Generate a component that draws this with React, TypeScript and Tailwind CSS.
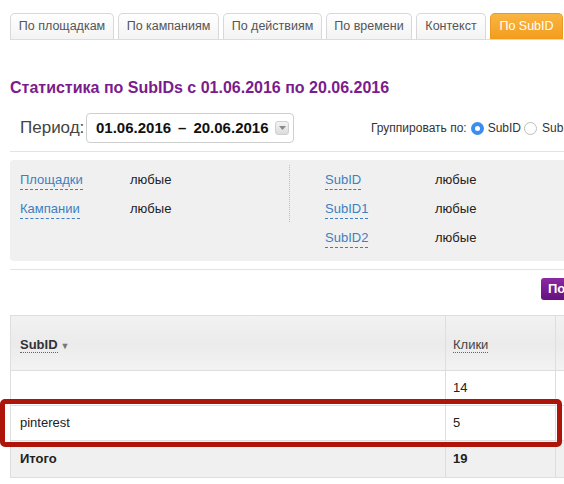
import React from "react";

const tabs = [
  { label: "По площадкам", w: "w-[104px]" },
  { label: "По кампаниям", w: "w-[101px]" },
  { label: "По действиям", w: "w-[99px]" },
  { label: "По времени", w: "w-[86px]" },
  { label: "Контекст", w: "w-[70px]" },
];

function FilterRow({ label, value }: { label: string; value: string }) {
  return (
    <div className="flex h-[20px] items-center">
      <div className="w-[110px]">
        <span className="pb-[2px] border-b border-dashed border-[#3d7fc0] text-[#3d7fc0]">{label}</span>
      </div>
      <span className="text-[#222]">{value}</span>
    </div>
  );
}

export default function App() {
  return (
    <div
      className="w-[564px] h-[484px] overflow-hidden bg-white relative"
      style={{ fontFamily: '"Liberation Sans", Arial, sans-serif' }}
    >
      <div className="w-[680px] pl-[10px]">
        {/* Tabs */}
        <div className="pt-[13px] flex gap-[4px] border-b border-[#dcdcdc]">
          {tabs.map((t) => (
            <div
              key={t.label}
              className={`${t.w} h-[26px] flex items-center justify-center rounded-t-[5px] border border-b-0 border-[#d8d8d8] bg-gradient-to-b from-white to-[#f3f3f3] text-[12.5px] text-[#555]`}
            >
              {t.label}
            </div>
          ))}
          <div className="w-[73px] h-[26px] flex items-center justify-center rounded-t-[5px] border border-b-0 border-[#e99a22] bg-gradient-to-b from-[#f9b540] to-[#f39c1b] text-[12.5px] text-white">
            По SubID
          </div>
        </div>

        {/* Title */}
        <h1 className="mt-[38px] text-[16px] leading-[20px] font-bold text-[#7a1c8c]">
          Статистика по SubIDs с 01.06.2016 по 20.06.2016
        </h1>

        {/* Period row */}
        <div className="mt-[15px] flex items-center h-[30px]">
          <span className="ml-[10px] w-[66px] text-[17px] text-[#444]">Период:</span>
          <div className="w-[208px] h-[30px] border border-[#cfcfcf] rounded-[4px] flex items-center pl-[9px] pr-[4px] bg-white">
            <span className="whitespace-nowrap text-[15px] font-bold text-[#111]">
              01.06.2016<span className="mx-[7px]">–</span>20.06.2016
            </span>
            <span className="ml-auto w-[14px] h-[14px] rounded-[3px] bg-gradient-to-b from-[#f4f4f4] to-[#dcdcdc] border border-[#d0d0d0] flex items-center justify-center">
              <svg width="7" height="4" viewBox="0 0 7 4">
                <path d="M0 0 L7 0 L3.5 4 Z" fill="#8a8a8a" />
              </svg>
            </span>
          </div>
          <div className="ml-[77px] flex items-center text-[12px] text-[#333] whitespace-nowrap">
            <span>Группировать по:</span>
            <span className="ml-[4px] w-[13px] h-[13px] rounded-full bg-[#3b8ef0] flex items-center justify-center">
              <span className="w-[5px] h-[5px] rounded-full bg-white" />
            </span>
            <span className="ml-[4px]">SubID</span>
            <span className="ml-[3px] w-[13px] h-[13px] rounded-full border border-[#bdbdbd] bg-white" />
            <span className="ml-[5px]">SubID1</span>
          </div>
        </div>

        <div className="mt-[8px] border-t border-[#e3e3e3]" />

        {/* Filter panel */}
        <div className="mt-[8px] h-[101px] rounded-[4px] bg-[#f0f0f0] flex text-[13px] pt-[10px] pl-[10px]">
          <div className="w-[269px] flex flex-col gap-[9px]">
            <FilterRow label="Площадки" value="любые" />
            <FilterRow label="Кампании" value="любые" />
          </div>
          <div className="mt-[-5px] h-[57px] border-l border-dotted border-[#bdbdbd]" />
          <div className="pl-[35px] flex flex-col gap-[9px]">
            <FilterRow label="SubID" value="любые" />
            <FilterRow label="SubID1" value="любые" />
            <FilterRow label="SubID2" value="любые" />
          </div>
        </div>

        <div className="mt-[8px] border-t border-[#e3e3e3]" />

        {/* Button row */}
        <div className="mt-[8px] flex">
          <div className="ml-[531px] h-[22px] px-[7px] rounded-[3px] bg-gradient-to-b from-[#8a2aa3] to-[#650f80] text-white text-[13px] font-bold flex items-center whitespace-nowrap">
            Показать
          </div>
        </div>

        {/* Table */}
        <div className="mt-[15px] relative">
          <table className="border-collapse text-[13px] text-[#222]">
            <tbody>
              <tr className="h-[55px] bg-gradient-to-b from-[#f2f2f2] via-[#ebebeb] to-[#f3f3f3]">
                <td className="w-[435px] border border-[#dedede] pl-[9px] pt-[3px]">
                  <span className="font-bold text-[#333] border-b border-dotted border-[#666]">SubID</span>
                  <span className="ml-[3px] text-[9px] text-[#777]">▼</span>
                </td>
                <td className="w-[110px] border border-[#dedede] pl-[7px] pt-[3px]">
                  <span className="text-[#444] border-b border-dotted border-[#666]">Клики</span>
                </td>
                <td className="w-[120px] border border-[#dedede] pl-[7px]"></td>
              </tr>
              <tr className="h-[35px] bg-white">
                <td className="border border-[#dedede] pl-[9px]"></td>
                <td className="border border-[#dedede] pl-[7px]">14</td>
                <td className="border border-[#dedede]"></td>
              </tr>
              <tr className="h-[35px] bg-white">
                <td className="border border-[#dedede] pl-[9px]">pinterest</td>
                <td className="border border-[#dedede] pl-[7px]">5</td>
                <td className="border border-[#dedede]"></td>
              </tr>
              <tr className="h-[37px] bg-[#f0f0f0] font-bold">
                <td className="border border-[#dedede] pl-[9px]">Итого</td>
                <td className="border border-[#dedede] pl-[7px]">19</td>
                <td className="border border-[#dedede]"></td>
              </tr>
            </tbody>
          </table>
        </div>
      </div>

      {/* Red highlight */}
      <div className="absolute left-0 top-[399px] w-[562px] h-[48px] border-[5px] border-[#ad150a] rounded-[5px] pointer-events-none" />
    </div>
  );
}
